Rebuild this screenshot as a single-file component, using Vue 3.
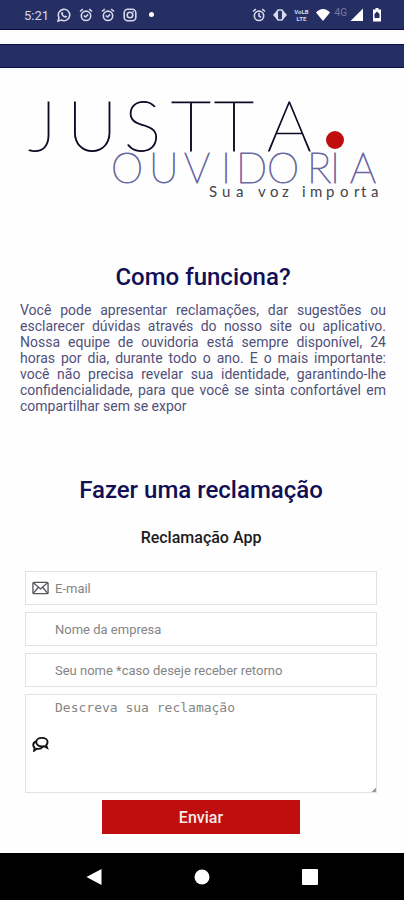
<script setup>
import { ref } from 'vue'

const email = ref('')
const company = ref('')
const fullName = ref('')
const message = ref('')
</script>

<template>
  <div class="screen">
    <header class="status">
      <div class="group">
        <span class="time">5:21</span>
        <svg class="icon" viewBox="0 0 14 14" aria-hidden="true">
          <path d="M1 13l1-3.3A5.700 5.700 0 1 1 4.300 12z" class="line" />
          <path d="M4.500 4.200l1-.3.8 1.600-.5.8c.5.9 1.100 1.400 2 1.800l.8-.6 1.500.8c-.1 1.100-1 1.600-2 1.400-2-.5-3.700-2.200-4-4-.1-.6 0-1.100.4-1.500z" class="solid" />
        </svg>
        <svg v-for="n in 2" :key="n" class="icon" viewBox="0 0 14 14" aria-hidden="true">
          <circle cx="7" cy="7.800" r="4.700" class="line" />
          <path d="M1 3.500L3.800 1.200M13 3.500L10.200 1.200M4.800 7.500l1.800 1.500 2.500-2.600" class="line" />
        </svg>
        <svg class="icon" viewBox="0 0 14 14" aria-hidden="true">
          <rect x="1.200" y="1.200" width="11.600" height="11.600" rx="3.500" class="line" />
          <circle cx="7" cy="7" r="2.800" class="line" />
          <circle cx="10.200" cy="3.800" r=".8" class="solid" />
        </svg>
        <span class="more"></span>
      </div>
      <div class="group right">
        <svg class="icon" viewBox="0 0 14 14" aria-hidden="true">
          <circle cx="7" cy="7.800" r="4.700" class="line" />
          <path d="M1 3.500L3.800 1.200M13 3.500L10.200 1.200M7 5v3l2 1.200" class="line" />
        </svg>
        <svg class="icon" viewBox="0 0 14 14" aria-hidden="true">
          <path d="M4 2.500L0 7l4 4.500zM10 2.500L14 7l-4 4.500z" class="solid" />
          <rect x="4.300" y="2" width="5.400" height="10" rx="1.500" class="line" />
        </svg>
        <span class="volte"><span>VoLB</span><span>LTE</span></span>
        <svg class="icon" viewBox="0 0 14 14" aria-hidden="true">
          <path d="M7 13L0 4.500C4-.2 10-.2 14 4.500z" class="bright" />
        </svg>
        <span class="net">4G</span>
        <svg class="icon" viewBox="0 0 14 14" aria-hidden="true">
          <path d="M13 .5V13H.5z" class="bright" />
        </svg>
        <svg class="icon battery" viewBox="0 0 10 14" aria-hidden="true">
          <path d="M3.500 0h3v1.500h2.500v12H1v-12h2.500z" class="bright" />
          <path d="M5 3.500L7.500 6v4h-5V6z" class="hole" />
        </svg>
      </div>
    </header>
    <div class="band"></div>

    <main class="page">
      <svg class="logo" viewBox="0 0 404 120" role="img" aria-label="JUSTTA. OUVIDORIA Sua voz importa">
        <text class="brand" x="28 67 124 171 214 267" y="69">JUSTTA</text>
        <circle cx="335" cy="58" r="9" class="dot" />
        <text class="sub" x="111 149 184 221 236 267 307 330 350" y="101">OUVIDORIA</text>
        <text class="tag" x="209 222 236 247 258 270 282 294 302 310 326 340 354 361 371" y="115">Sua voz importa</text>
      </svg>

      <section class="about">
        <h1>Como funciona?</h1>
        <p>Você pode apresentar reclamações, dar sugestões ou esclarecer dúvidas através do nosso site ou aplicativo. Nossa equipe de ouvidoria está sempre disponível, 24 horas por dia, durante todo o ano. E o mais importante: você não precisa revelar sua identidade, garantindo-lhe confidencialidade, para que você se sinta confortável em compartilhar sem se expor</p>
      </section>

      <section class="complaint">
        <h1>Fazer uma reclamação</h1>
        <h2>Reclamação App</h2>
        <form @submit.prevent>
          <label class="field">
            <svg class="mark" viewBox="0 0 18 14" aria-hidden="true">
              <rect x="1" y="1" width="16" height="12" rx="1" />
              <path d="M1.500 1.500L9 8l7.500-6.500M1.500 12.500l5-6M16.500 12.500l-5-6" />
            </svg>
            <input v-model="email" type="email" placeholder="E-mail" aria-label="E-mail">
          </label>
          <label class="field">
            <input v-model="company" type="text" placeholder="Nome da empresa" aria-label="Nome da empresa">
          </label>
          <label class="field">
            <input v-model="fullName" type="text" placeholder="Seu nome *caso deseje receber retorno" aria-label="Seu nome">
          </label>
          <label class="field">
            <svg class="mark chat" viewBox="0 0 18 16" aria-hidden="true">
              <path d="M10.500 1.500c3.400 0 6 1.900 6 4.500 0 1.400-.6 2.500-1.500 3.300l1 2.700-3.200-1.600c-.7.2-1.500.3-2.300.3-3.400 0-6-2-6-4.700s2.600-4.500 6-4.500z" />
              <path d="M4.300 5.200C2.500 6 1.300 7.300 1.300 9c0 1.200.5 2.100 1.400 2.800L2.300 15l2.900-2c2.500.4 4.800-.2 6-1.800" />
            </svg>
            <textarea v-model="message" placeholder="Descreva sua reclamação" aria-label="Descreva sua reclamação"></textarea>
          </label>
          <button type="submit">Enviar</button>
        </form>
      </section>
    </main>

    <nav class="system">
      <button type="button" aria-label="Voltar">
        <svg viewBox="0 0 16 16"><path d="M15.500 0v16L.5 8z" /></svg>
      </button>
      <button type="button" aria-label="Início">
        <svg viewBox="0 0 16 16"><circle cx="8" cy="8" r="7.500" /></svg>
      </button>
      <button type="button" aria-label="Recentes">
        <svg viewBox="0 0 16 16"><rect width="16" height="16" rx="1" /></svg>
      </button>
    </nav>
  </div>
</template>

<style>
body {
  margin: 0;
  background: #fefefe;
}
</style>

<style scoped>
* {
  box-sizing: border-box;
}
.screen {
  display: flex;
  flex-direction: column;
  min-height: 100vh;
  font-family: Roboto, "Liberation Sans", sans-serif;
  color: #26264f;
}
.status {
  display: flex;
  justify-content: space-between;
  align-items: center;
  height: 30px;
  padding: 0 22px 0 24px;
  background: #262f63;
  border-bottom: 1px solid #0c0b50;
}
.group {
  display: flex;
  align-items: center;
  gap: 8px;
  color: #d5d9ea;
}
.right {
  gap: 7px;
}
.time {
  font-size: 13px;
  line-height: 16px;
  padding-top: 2px;
}
.icon {
  width: 14px;
  height: 14px;
}
.battery {
  width: 10px;
  margin-left: 1px;
}
.line {
  fill: none;
  stroke: #d5d9ea;
  stroke-width: 1.600;
}
.solid {
  fill: #d5d9ea;
}
.bright {
  fill: #fff;
}
.hole {
  fill: #262f63;
}
.more {
  width: 5px;
  height: 5px;
  margin-left: 4px;
  border-radius: 50%;
  background: #fff;
}
.volte {
  display: flex;
  flex-direction: column;
  align-items: center;
  font-size: 6px;
  line-height: 7px;
  font-weight: 700;
}
.net {
  font-size: 10px;
  line-height: 10px;
  padding-bottom: 4px;
  color: #727aa4;
}
.right .net {
  margin: 0 -4px 0 -2px;
}
.band {
  height: 24px;
  margin-top: 14px;
  background: #262f63;
  border-top: 1px solid #0c0b50;
  border-bottom: 1px solid #0c0b50;
}
.page {
  flex: 1;
  padding: 14px 0 19px;
}
.logo {
  display: block;
  width: 100%;
  overflow: visible;
}
.logo text {
  font-family: Lato, "Open Sans", sans-serif;
}
.brand {
  font-size: 70px;
  font-weight: 100;
  fill: #0d0b26;
  stroke: #0d0b26;
  stroke-width: 1px;
}
.sub {
  font-size: 41px;
  font-weight: 100;
  fill: #3c3c80;
  stroke: #6a6aa4;
  stroke-width: 1px;
}
.tag {
  font-size: 15px;
  font-weight: 400;
  fill: #444448;
}
.dot {
  fill: #c00d0d;
}
h1 {
  margin: 0;
  font-size: 24px;
  line-height: 28px;
  font-weight: 500;
  text-align: center;
  color: #120f55;
}
.about {
  padding: 61px 18px 0 20px;
}
.about p {
  margin: 11px 0 0;
  font-size: 14px;
  line-height: 16px;
  text-align: justify;
  color: #50507a;
}
.complaint {
  padding: 62px 27px 0 25px;
}
h2 {
  margin: 24px 0;
  font-size: 16px;
  line-height: 19px;
  font-weight: 500;
  text-align: center;
  color: #1c1c1e;
}
form {
  display: flex;
  flex-direction: column;
  gap: 7px;
}
.field {
  display: block;
  position: relative;
}
.mark {
  position: absolute;
  left: 7px;
  top: 0;
  bottom: 0;
  width: 17px;
  height: 14px;
  margin: auto 0;
  fill: none;
  stroke: #55555a;
  stroke-width: 1.400;
}
.chat {
  height: 16px;
  stroke: #111;
  stroke-width: 2;
}
input,
textarea {
  display: block;
  width: 100%;
  border: 1px solid #e2e2e2;
  border-radius: 0;
  background: #fff;
  color: #333;
  font-size: 13px;
  outline: none;
}
input {
  height: 34px;
  padding: 0 8px 0 29px;
  font-family: inherit;
}
textarea {
  height: 99px;
  padding: 5px 8px 5px 29px;
  font-family: "DejaVu Sans Mono", "Liberation Mono", monospace;
  line-height: 16px;
}
textarea::-webkit-resizer {
  background: linear-gradient(135deg, transparent 85%, #999 85%);
}
input::placeholder,
textarea::placeholder {
  color: #858585;
  opacity: 1;
}
form button {
  align-self: center;
  width: 56%;
  height: 34px;
  border: 0;
  background: #c00d0d;
  color: #f8e8e8;
  font-family: inherit;
  font-size: 16px;
  font-weight: 500;
}
.system {
  display: flex;
  justify-content: space-between;
  align-items: center;
  height: 47px;
  padding: 0 86px;
  background: #000;
}
.system button {
  display: flex;
  padding: 0;
  border: 0;
  background: none;
}
.system svg {
  width: 16px;
  height: 16px;
  fill: #fff;
}
</style>
